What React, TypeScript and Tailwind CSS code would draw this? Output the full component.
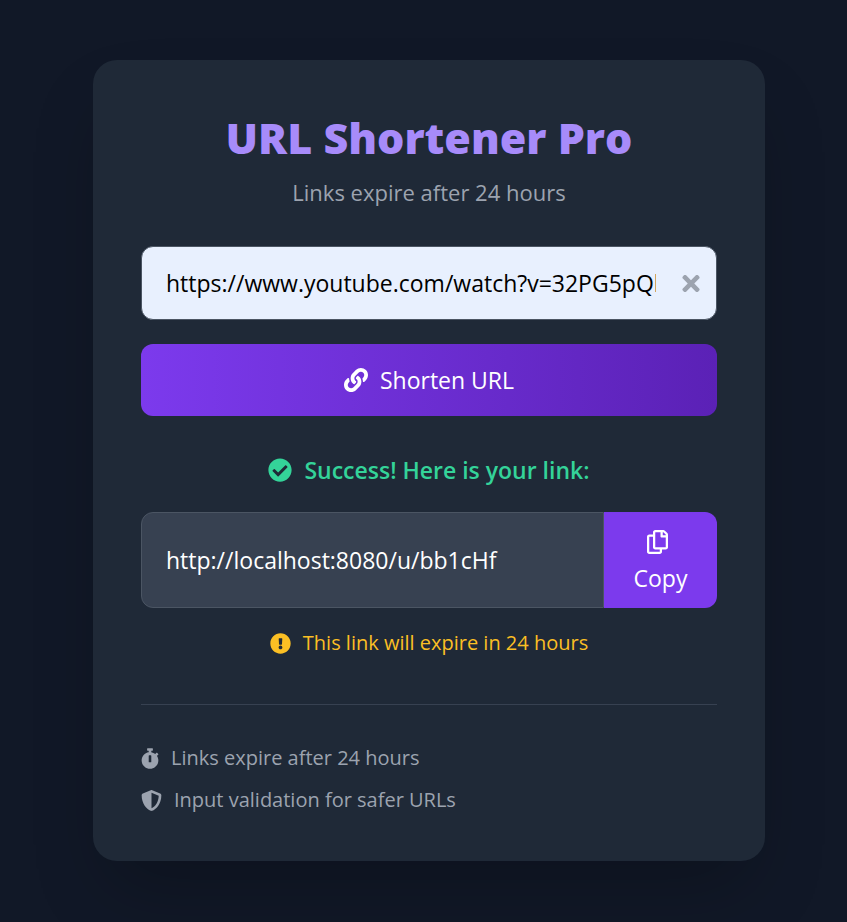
import { useState } from "react";
import {
  FaCheckCircle,
  FaExclamationCircle,
  FaLink,
  FaRegCopy,
  FaShieldAlt,
  FaStopwatch,
  FaTimes,
} from "react-icons/fa";

const SHORT_URL = "http://localhost:8080/u/bb1cHf";

export default function App() {
  const [url, setUrl] = useState("https://www.youtube.com/watch?v=32PG5pQkXyZ");

  return (
    <main className="flex min-h-screen items-start justify-center bg-[#111827] py-[60px] pl-[11px] font-['Segoe_UI','Open_Sans','Noto_Sans',sans-serif] text-[23px] leading-9 text-white">
      <section className="w-full max-w-2xl rounded-3xl bg-[#1f2937] px-12 pt-12 pb-[46px] shadow-[0_38px_75px_-18px_rgba(0,0,0,0.25)]">
        <header className="mb-9 text-center">
          <h1 className="text-[43px] leading-[60px] font-extrabold text-[#a78bfa]">URL Shortener Pro</h1>
          <p className="mt-1.5 text-[22px] text-[#9ca3af]">Links expire after 24 hours</p>
        </header>

        <form onSubmit={(e) => e.preventDefault()} className="flex flex-col gap-6">
          <div className="flex h-[74px] items-center rounded-xl border border-[#4b5563] bg-[#e8f0fe] pr-4 pl-6">
            <input
              type="text"
              aria-label="URL to shorten"
              value={url}
              onChange={(e) => setUrl(e.target.value)}
              className="min-w-0 flex-1 bg-transparent text-black outline-none"
            />
            <button type="button" aria-label="Clear" onClick={() => setUrl("")} className="ml-[26px] text-[#9ca3af]">
              <FaTimes className="h-[25px] w-[18px]" />
            </button>
          </div>
          <button
            type="submit"
            className="flex h-[72px] items-center justify-center gap-3 rounded-xl bg-linear-to-r/srgb from-[#7c3aed] to-[#5b21b6]"
          >
            <FaLink className="text-2xl" />
            Shorten URL
          </button>
        </form>

        <p className="mt-9 mb-6 flex items-center justify-center gap-3 font-semibold text-[#34d399]">
          <FaCheckCircle className="text-2xl" />
          Success! Here is your link:
        </p>

        <div className="flex h-24">
          <input
            readOnly
            aria-label="Short link"
            value={SHORT_URL}
            className="min-w-0 flex-1 rounded-l-xl border border-[#4b5563] bg-[#374151] px-6 outline-none"
          />
          <button type="button" className="flex w-[113px] flex-col items-center justify-center rounded-r-xl bg-[#7c3aed]">
            <FaRegCopy className="my-1.5 mr-1.5 h-6 w-[21px]" />
            Copy
          </button>
        </div>

        <p className="mt-5 flex items-center justify-center gap-3 text-xl leading-[30px] text-[#fbbf24]">
          <FaExclamationCircle className="text-[21px]" />
          This link will expire in 24 hours
        </p>

        <ul className="mt-[46px] flex flex-col gap-3 border-t border-[#374151] pt-[38px] text-xl leading-[30px] text-[#9ca3af]">
          <li className="flex items-center gap-3">
            <FaStopwatch className="h-[21px] w-[18px]" />
            Links expire after 24 hours
          </li>
          <li className="flex items-center gap-3">
            <FaShieldAlt className="h-[21px] w-[21px]" />
            Input validation for safer URLs
          </li>
        </ul>
      </section>
    </main>
  );
}
